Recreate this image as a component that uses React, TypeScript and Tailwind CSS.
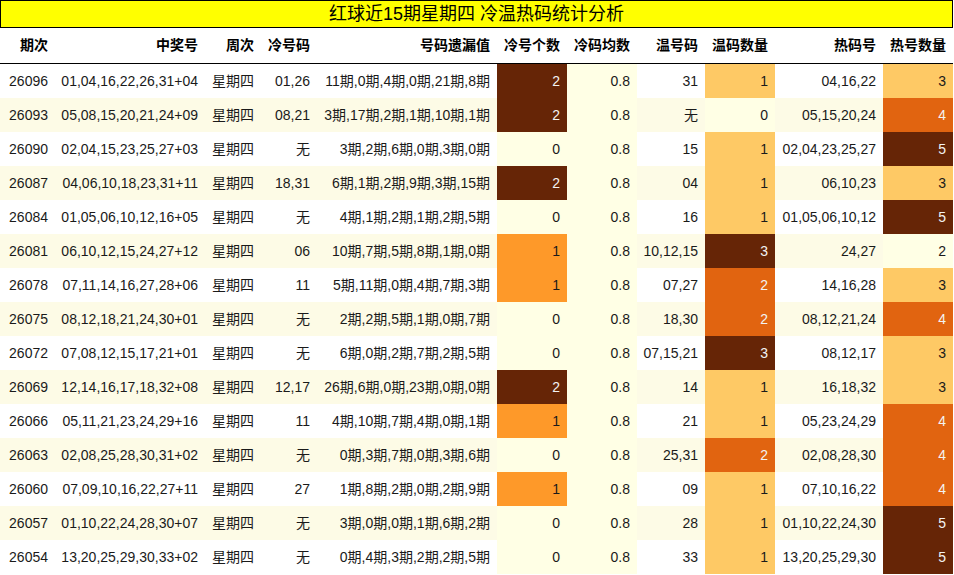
import React from 'react';

type Row = [string, string, string, string, string, number, string, string, number, string, number];

const rows: Row[] = [
  ['26096', '01,04,16,22,26,31+04', '星期四', '01,26', '11期,0期,4期,0期,21期,8期', 2, '0.8', '31', 1, '04,16,22', 3],
  ['26093', '05,08,15,20,21,24+09', '星期四', '08,21', '3期,17期,2期,1期,10期,1期', 2, '0.8', '无', 0, '05,15,20,24', 4],
  ['26090', '02,04,15,23,25,27+03', '星期四', '无', '3期,2期,6期,0期,3期,0期', 0, '0.8', '15', 1, '02,04,23,25,27', 5],
  ['26087', '04,06,10,18,23,31+11', '星期四', '18,31', '6期,1期,2期,9期,3期,15期', 2, '0.8', '04', 1, '06,10,23', 3],
  ['26084', '01,05,06,10,12,16+05', '星期四', '无', '4期,1期,2期,1期,2期,5期', 0, '0.8', '16', 1, '01,05,06,10,12', 5],
  ['26081', '06,10,12,15,24,27+12', '星期四', '06', '10期,7期,5期,8期,1期,0期', 1, '0.8', '10,12,15', 3, '24,27', 2],
  ['26078', '07,11,14,16,27,28+06', '星期四', '11', '5期,11期,0期,4期,7期,3期', 1, '0.8', '07,27', 2, '14,16,28', 3],
  ['26075', '08,12,18,21,24,30+01', '星期四', '无', '2期,2期,5期,1期,0期,7期', 0, '0.8', '18,30', 2, '08,12,21,24', 4],
  ['26072', '07,08,12,15,17,21+01', '星期四', '无', '6期,0期,2期,7期,2期,5期', 0, '0.8', '07,15,21', 3, '08,12,17', 3],
  ['26069', '12,14,16,17,18,32+08', '星期四', '12,17', '26期,6期,0期,23期,0期,0期', 2, '0.8', '14', 1, '16,18,32', 3],
  ['26066', '05,11,21,23,24,29+16', '星期四', '11', '4期,10期,7期,4期,0期,1期', 1, '0.8', '21', 1, '05,23,24,29', 4],
  ['26063', '02,08,25,28,30,31+02', '星期四', '无', '0期,3期,7期,0期,3期,6期', 0, '0.8', '25,31', 2, '02,08,28,30', 4],
  ['26060', '07,09,10,16,22,27+11', '星期四', '27', '1期,8期,2期,0期,2期,9期', 1, '0.8', '09', 1, '07,10,16,22', 4],
  ['26057', '01,10,22,24,28,30+07', '星期四', '无', '3期,0期,0期,1期,6期,2期', 0, '0.8', '28', 1, '01,10,22,24,30', 5],
  ['26054', '13,20,25,29,30,33+02', '星期四', '无', '0期,4期,3期,2期,2期,5期', 0, '0.8', '33', 1, '13,20,25,29,30', 5],
];

const headers = ['期次', '中奖号', '周次', '冷号码', '号码遗漏值', '冷号个数', '冷码均数', '温号码', '温码数量', '热码号', '热号数量'];

const cols = 'grid grid-cols-[55px_150px_56px_56px_180px_70px_70px_68px_70px_108px_70px]';

const LIGHT = 'bg-[#ffffe5] text-[#1a1a1a]';
const PALE = 'bg-[#fec965] text-[#1a1a1a]';
const ORANGE = 'bg-[#fe9929] text-[#1a1a1a]';
const RUST = 'bg-[#e16410] text-[#f3f3f3]';
const BROWN = 'bg-[#662506] text-[#f3f3f3]';

function coldColor(n: number) {
  if (n === 2) return BROWN;
  if (n === 1) return ORANGE;
  return LIGHT;
}

function warmColor(n: number) {
  if (n === 3) return BROWN;
  if (n === 2) return RUST;
  if (n === 1) return PALE;
  return LIGHT;
}

function hotColor(n: number) {
  if (n === 5) return BROWN;
  if (n === 4) return RUST;
  if (n === 3) return PALE;
  return LIGHT;
}

function Cell({ children, className = '' }: { children: React.ReactNode; className?: string }) {
  return <div className={`flex items-center justify-end pr-[7px] whitespace-nowrap ${className}`}>{children}</div>;
}

export default function App() {
  return (
    <div
      className="w-[953px] bg-white text-[14px] text-[#1a1a1a]"
      style={{ fontFamily: '"Liberation Sans", "Noto Sans CJK SC", sans-serif' }}
    >
      <div className="h-[28px] border border-black bg-[#ffff00] flex items-center justify-center text-[18px] text-black">
        红球近15期星期四 冷温热码统计分析
      </div>
      <div className={`${cols} h-[36px] border-b border-black font-bold text-black`}>
        {headers.map((h) => (
          <Cell key={h}>{h}</Cell>
        ))}
      </div>
      {rows.map((r, i) => {
        const bg = i % 2 === 1 ? 'bg-[#fdfbe6]' : 'bg-white';
        return (
          <div key={r[0]} className={`${cols} h-[34px] ${bg}`}>
            <Cell>{r[0]}</Cell>
            <Cell>{r[1]}</Cell>
            <Cell>{r[2]}</Cell>
            <Cell>{r[3]}</Cell>
            <Cell>{r[4]}</Cell>
            <Cell className={coldColor(r[5])}>{r[5]}</Cell>
            <Cell className={LIGHT}>{r[6]}</Cell>
            <Cell>{r[7]}</Cell>
            <Cell className={warmColor(r[8])}>{r[8]}</Cell>
            <Cell>{r[9]}</Cell>
            <Cell className={hotColor(r[10])}>{r[10]}</Cell>
          </div>
        );
      })}
    </div>
  );
}
